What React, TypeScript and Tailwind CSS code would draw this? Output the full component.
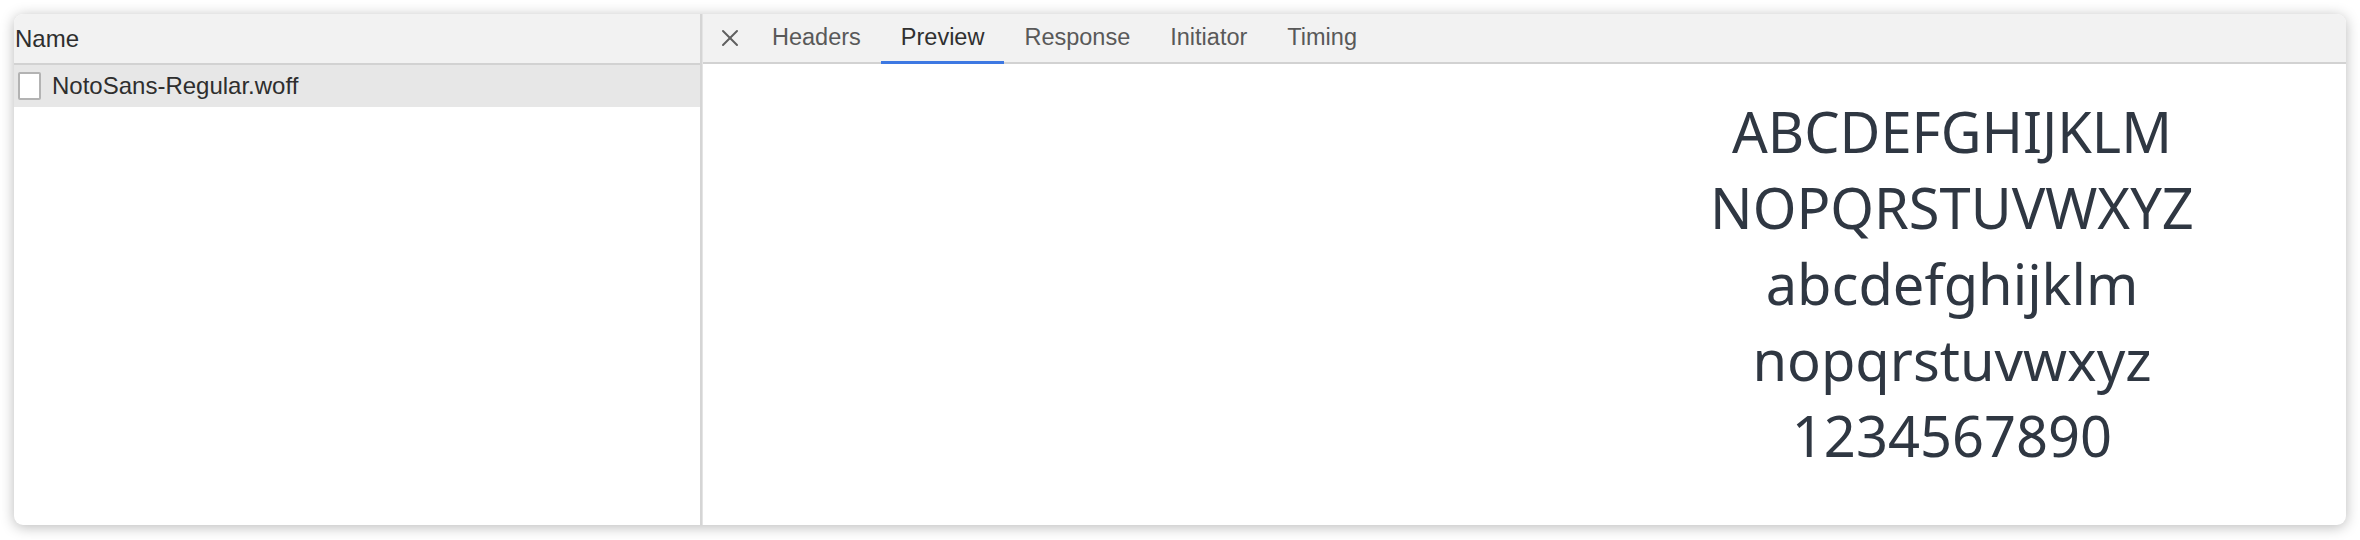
import { X } from 'lucide-react';

const tabs = ['Headers', 'Preview', 'Response', 'Initiator', 'Timing'];

const lines = ['ABCDEFGHIJKLM', 'NOPQRSTUVWXYZ', 'abcdefghijklm', 'nopqrstuvwxyz', '1234567890'];

export default function App() {
  return (
    <div className="w-[2360px] h-[540px] bg-white p-[14px] font-['Liberation_Sans',Arial,sans-serif]">
      <div className="w-[2332px] h-[511px] flex rounded-[9px] overflow-hidden bg-white shadow-[0_2px_14px_rgba(0,0,0,0.28)]">
        {/* request list */}
        <div className="w-[686px] flex flex-col">
          <div className="h-[51px] shrink-0 bg-[#f2f2f2] border-b-2 border-[#d2d2d2] flex items-center pl-px text-[24px] text-[#2e2e2e]">
            Name
          </div>
          <div className="h-[42px] bg-[#e7e7e7] flex items-center pl-[4px] gap-[11px] text-[24px] text-[#2e2e2e]">
            <div className="w-[23px] h-[28px] bg-white border-2 border-[#b3b3b3] rounded-[2px]" />
            <span>NotoSans-Regular.woff</span>
          </div>
        </div>

        <div className="w-[3px] bg-[#d5d5d5] border-r border-[#e4e4e4]" />

        {/* detail pane */}
        <div className="flex-1 flex flex-col">
          <div className="h-[50px] shrink-0 bg-[#f2f2f2] border-b-2 border-[#d2d2d2] flex items-stretch pl-[13px] text-[23.5px] text-[#595959]">
            <div className="flex items-center pr-[8px]">
              <X size={28} strokeWidth={1.7} className="text-[#606060]" />
            </div>
            {tabs.map((t) => (
              <div
                key={t}
                className={
                  t === 'Preview'
                    ? 'relative flex items-center px-[20px] text-[#303030]'
                    : 'relative flex items-center px-[20px]'
                }
              >
                {t}
                {t === 'Preview' && (
                  <span className="absolute left-0 right-0 bottom-[-2px] h-[3px] bg-[#3d78e2]" />
                )}
              </div>
            ))}
          </div>
          <div className="flex-1 flex justify-end pt-[29px]">
            <div className="w-[788px] flex flex-col items-center font-['Noto_Sans',sans-serif] text-[56px] leading-[76px] text-[#2f3742]">
              {lines.map((l) => (
                <div key={l}>{l}</div>
              ))}
            </div>
          </div>
        </div>
      </div>
    </div>
  );
}
